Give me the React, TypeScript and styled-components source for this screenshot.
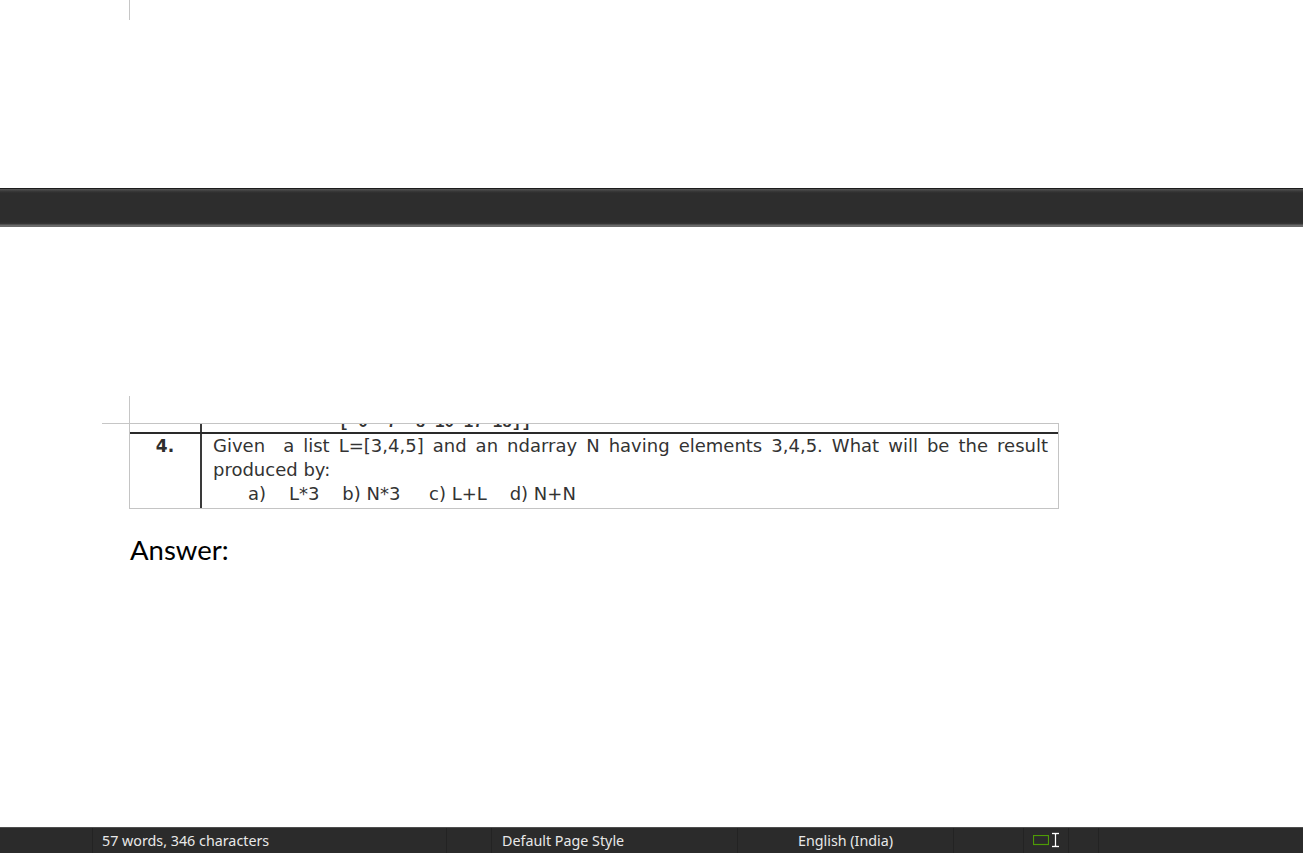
import React from "react";
import styled, { createGlobalStyle } from "styled-components";

const Global = createGlobalStyle`
  html, body { margin: 0; padding: 0; background: #ffffff; }
  body { overflow: hidden; }
`;

const Screen = styled.div`
  display: flex;
  flex-direction: column;
  width: 1303px;
  height: 853px;
  background: #ffffff;
`;

const PrevPage = styled.div`
  height: 188px;
  background: #ffffff;
  flex: none;
`;

const TopMark = styled.div`
  margin-left: 129px;
  width: 1px;
  height: 20px;
  background: #c6c6c6;
`;

const PageGap = styled.div`
  flex: none;
  height: 39px;
  background: linear-gradient(
    to bottom,
    #1c1c1c 0px,
    #1c1c1c 1px,
    #575757 1px,
    #3a3a3a 3px,
    #2d2d2d 5px,
    #2d2d2d 34px,
    #363636 36px,
    #6a6a6a 37px,
    #6a6a6a 39px
  );
`;

const Page = styled.div`
  flex: 1;
  background: #ffffff;
  padding: 169px 0 0 102px;
  display: flex;
  flex-direction: column;
  align-items: flex-start;
`;

const CornerMark = styled.div`
  width: 27px;
  height: 27px;
  border-right: 1px solid #c6c6c6;
  border-bottom: 1px solid #c6c6c6;
  margin-bottom: -1px;
`;

const Table = styled.div`
  margin-left: 27px;
  width: 928px;
  border: 1px solid #c4c4c4;
  display: flex;
  flex-direction: column;
`;

const Row = styled.div<{ $clip?: boolean }>`
  display: flex;
  ${(p) => (p.$clip ? "height: 8px; overflow: hidden;" : "")}
  ${(p) => (p.$clip ? "" : "border-top: 2px solid #2a2a2a;")}
`;

const NumCell = styled.div`
  flex: none;
  width: 70px;
  border-right: 2px solid #3a3a3a;
  display: flex;
  justify-content: center;
  font-family: "DejaVu Sans", sans-serif;
  font-weight: bold;
  font-size: 17px;
  line-height: 24px;
  color: #2e2e2e;
`;

const ClipText = styled.div`
  flex: 1;
  display: flex;
  align-items: flex-end;
  padding-left: 137px;
  font-family: "Liberation Mono", monospace;
  font-weight: bold;
  font-size: 16px;
  line-height: 17px;
  color: #333;
  white-space: pre;
`;

const BodyCell = styled.div`
  flex: 1;
  padding: 0 10px 2px 11px;
  font-family: "DejaVu Sans", sans-serif;
  font-size: 18px;
  line-height: 24px;
  color: #333333;
`;

const JustLine = styled.div`
  text-align: justify;
  text-align-last: justify;
  white-space: nowrap;
`;

const Line = styled.div<{ $indent?: number }>`
  white-space: pre;
  padding-left: ${(p) => p.$indent ?? 0}px;
`;

const Answer = styled.div`
  margin: 25px 0 0 28px;
  font-family: Lato, "Open Sans", sans-serif;
  font-size: 27.5px;
  line-height: 32px;
  color: #000;
`;

const StatusBar = styled.div`
  flex: none;
  height: 25px;
  border-top: 1px solid #4e4e4e;
  background: #2b2b2b;
  display: flex;
  align-items: stretch;
  font-family: "Noto Sans", "Open Sans", sans-serif;
  font-size: 14.3px;
  color: #e8e8e8;
`;

const Section = styled.div<{ $w?: number; $center?: boolean; $pad?: number }>`
  ${(p) => (p.$w ? `width: ${p.$w}px; flex: none;` : "flex: 1;")}
  border-left: 1px solid #232323;
  display: flex;
  align-items: center;
  justify-content: ${(p) => (p.$center ? "center" : "flex-start")};
  padding-left: ${(p) => p.$pad ?? 0}px;
  padding-bottom: 1px;
  box-sizing: border-box;
  white-space: nowrap;
  &:first-child { border-left: none; }
`;

const Icons = styled.div`
  display: flex;
  align-items: center;
  gap: 2px;
  padding-left: 9px;
`;

export default function App() {
  return (
    <Screen>
      <Global />
      <PrevPage>
        <TopMark />
      </PrevPage>
      <PageGap />
      <Page>
        <CornerMark />
        <Table>
          <Row $clip>
            <NumCell />
            <ClipText>{"[ 0  7  8 10 17 18]]"}</ClipText>
          </Row>
          <Row>
            <NumCell>4.</NumCell>
            <BodyCell>
              <JustLine>
                Given&nbsp; a list L=[3,4,5] and an ndarray N having elements 3,4,5. What will be the result
              </JustLine>
              <Line>produced by:</Line>
              <Line $indent={35}>{"a)    L*3    b) N*3     c) L+L    d) N+N"}</Line>
            </BodyCell>
          </Row>
        </Table>
        <Answer>Answer:</Answer>
      </Page>
      <StatusBar>
        <Section $w={92} />
        <Section $w={354} $pad={9}>57 words, 346 characters</Section>
        <Section $w={45} />
        <Section $w={246} $pad={10}>Default Page Style</Section>
        <Section $w={216} $center>English (India)</Section>
        <Section $w={70} />
        <Section $w={45}>
          <Icons>
            <svg width="16" height="11" viewBox="0 0 16 11">
              <rect x="0.5" y="0.5" width="15" height="9" fill="none" stroke="#4e9a06" strokeWidth="1.2" />
            </svg>
            <svg width="9" height="16" viewBox="0 0 9 16">
              <path d="M1 1.5h7M4.5 1.5v13M1 14.5h7" stroke="#111" strokeWidth="3.2" fill="none" />
              <path d="M1 1.5h7M4.5 1.5v13M1 14.5h7" stroke="#fff" strokeWidth="1.4" fill="none" />
            </svg>
          </Icons>
        </Section>
        <Section $w={30} />
        <Section />
      </StatusBar>
    </Screen>
  );
}
